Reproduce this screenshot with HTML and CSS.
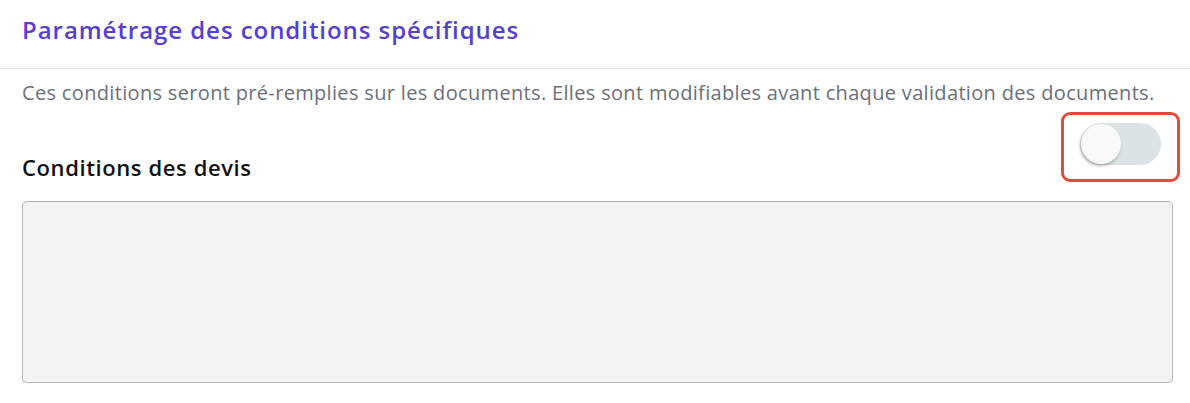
FILE: index.html
```html
<!DOCTYPE html>
<html lang="fr">
<head>
<meta charset="utf-8">
<title>Paramétrage des conditions spécifiques</title>
<link rel="stylesheet" href="styles.css">
</head>
<body>
  <div class="header">
    <h2 class="title">Paramétrage des conditions spécifiques</h2>
  </div>
  <div class="content">
    <p class="desc">Ces conditions seront pré-remplies sur les documents. Elles sont modifiables avant chaque validation des documents.</p>
    <div class="row">
      <h3 class="label">Conditions des devis</h3>
      <div class="highlight">
        <div class="toggle"><span class="knob"></span></div>
      </div>
    </div>
    <div class="textarea"></div>
  </div>
</body>
</html>
```

FILE: styles.css
```css
* { box-sizing: border-box; }
html, body { margin: 0; padding: 0; background: #ffffff; }
body { font-family: "Open Sans", "Noto Sans", sans-serif; }

.header {
  height: 69px;
  padding: 15px 22px 0;
  border-bottom: 1px solid #e0e2e7;
}
.title {
  margin: 0;
  font-size: 24px;
  line-height: 30px;
  font-weight: 600;
  letter-spacing: 0.95px;
  color: #5540d6;
  white-space: nowrap;
}

.content {
  padding: 0 17px 0 22px;
}
.desc {
  margin: 12px 0 0;
  font-size: 20px;
  line-height: 24px;
  letter-spacing: 0.33px;
  color: #6b7079;
  white-space: nowrap;
}

.row {
  display: flex;
  justify-content: space-between;
  align-items: flex-end;
  margin-top: 7px;
}
.label {
  margin: 0 0 2px;
  font-size: 22px;
  line-height: 26px;
  font-weight: 600;
  letter-spacing: 0.6px;
  color: #111111;
}
.highlight {
  margin-right: -7px;
  width: 119px;
  height: 70px;
  border: 3px solid #e24c3a;
  border-radius: 9px;
  padding: 8px 16px 0;
}
.toggle {
  width: 81px;
  height: 42px;
  border-radius: 21px;
  background: #dce3e6;
  padding: 1px;
}
.knob {
  display: block;
  width: 40px;
  height: 40px;
  border-radius: 50%;
  background: #f9f9f9;
  box-shadow: -1px 2px 3px rgba(0, 0, 0, 0.28);
}

.textarea {
  margin-top: 19px;
  height: 182px;
  background: #f3f3f3;
  border: 1px solid #b9b9b9;
  border-top-color: #b0b0b0;
  border-radius: 5px;
  box-shadow: 0 1px 1px rgba(0,0,0,0.08);
}
```
